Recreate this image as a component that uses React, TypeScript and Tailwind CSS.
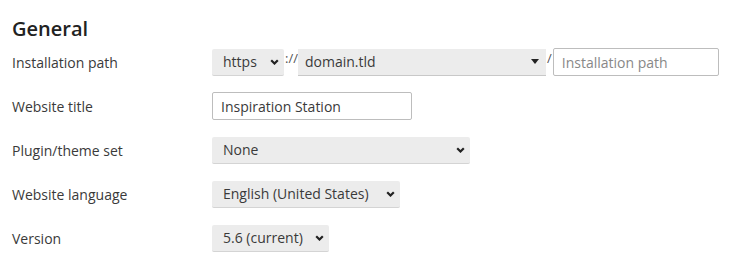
import React from 'react';

const Chevron = () => (
  <svg width="9" height="6" viewBox="0 0 9 6" className="shrink-0">
    <path d="M1.2 1.2 L4.5 4.5 L7.8 1.2" fill="none" stroke="#222" strokeWidth="2.2" />
  </svg>
);

const Select = ({ value, width }: { value: string; width: string }) => (
  <div
    className={`${width} h-[27px] flex items-center justify-between pl-[11px] pr-[5px] bg-[#ececec] rounded-[2px] border-b border-[#d4d4d4] text-[#3a3a3a]`}
  >
    <span>{value}</span>
    <Chevron />
  </div>
);

const Row = ({ label, children }: { label: string; children: React.ReactNode }) => (
  <div className="flex items-center h-[44px]">
    <div className="w-[200px] text-[#3a3a3a]">{label}</div>
    <div className="flex items-center">{children}</div>
  </div>
);

export default function App() {
  return (
    <div
      className="bg-white w-[749px] h-[267px] overflow-hidden px-[12px] text-[14px]"
      style={{ fontFamily: '"Open Sans", sans-serif' }}
    >
      <h2 className="text-[20px] font-semibold text-[#222] leading-none pt-[19px] pb-[1px]">General</h2>
      <Row label="Installation path">
        <Select value="https" width="w-[72px]" />
        <span className="text-[#555] text-[13px] ml-[1px] -mt-[6px]">://</span>
        <div className="w-[248px] h-[27px] flex items-center justify-between pl-[7px] pr-[7px] bg-[#ececec] border-b border-[#c8c8c8] text-[#3a3a3a]">
          <span>domain.tld</span>
          <svg width="8" height="5" viewBox="0 0 8 5">
            <path d="M0 0 L8 0 L4 5 Z" fill="#222" />
          </svg>
        </div>
        <span className="text-[#555] text-[13px] px-[1px] -mt-[6px]">/</span>
        <input
          className="w-[166px] h-[28px] border border-[#bdbdbd] rounded-[2px] px-[8px] outline-none placeholder:text-[#888]"
          placeholder="Installation path"
        />
      </Row>
      <Row label="Website title">
        <input
          className="w-[200px] h-[28px] border border-[#bdbdbd] rounded-[2px] px-[8px] outline-none text-[#3a3a3a]"
          defaultValue="Inspiration Station"
        />
      </Row>
      <Row label="Plugin/theme set">
        <Select value="None" width="w-[258px]" />
      </Row>
      <Row label="Website language">
        <Select value="English (United States)" width="w-[188px]" />
      </Row>
      <Row label="Version">
        <Select value="5.6 (current)" width="w-[117px]" />
      </Row>
    </div>
  );
}
